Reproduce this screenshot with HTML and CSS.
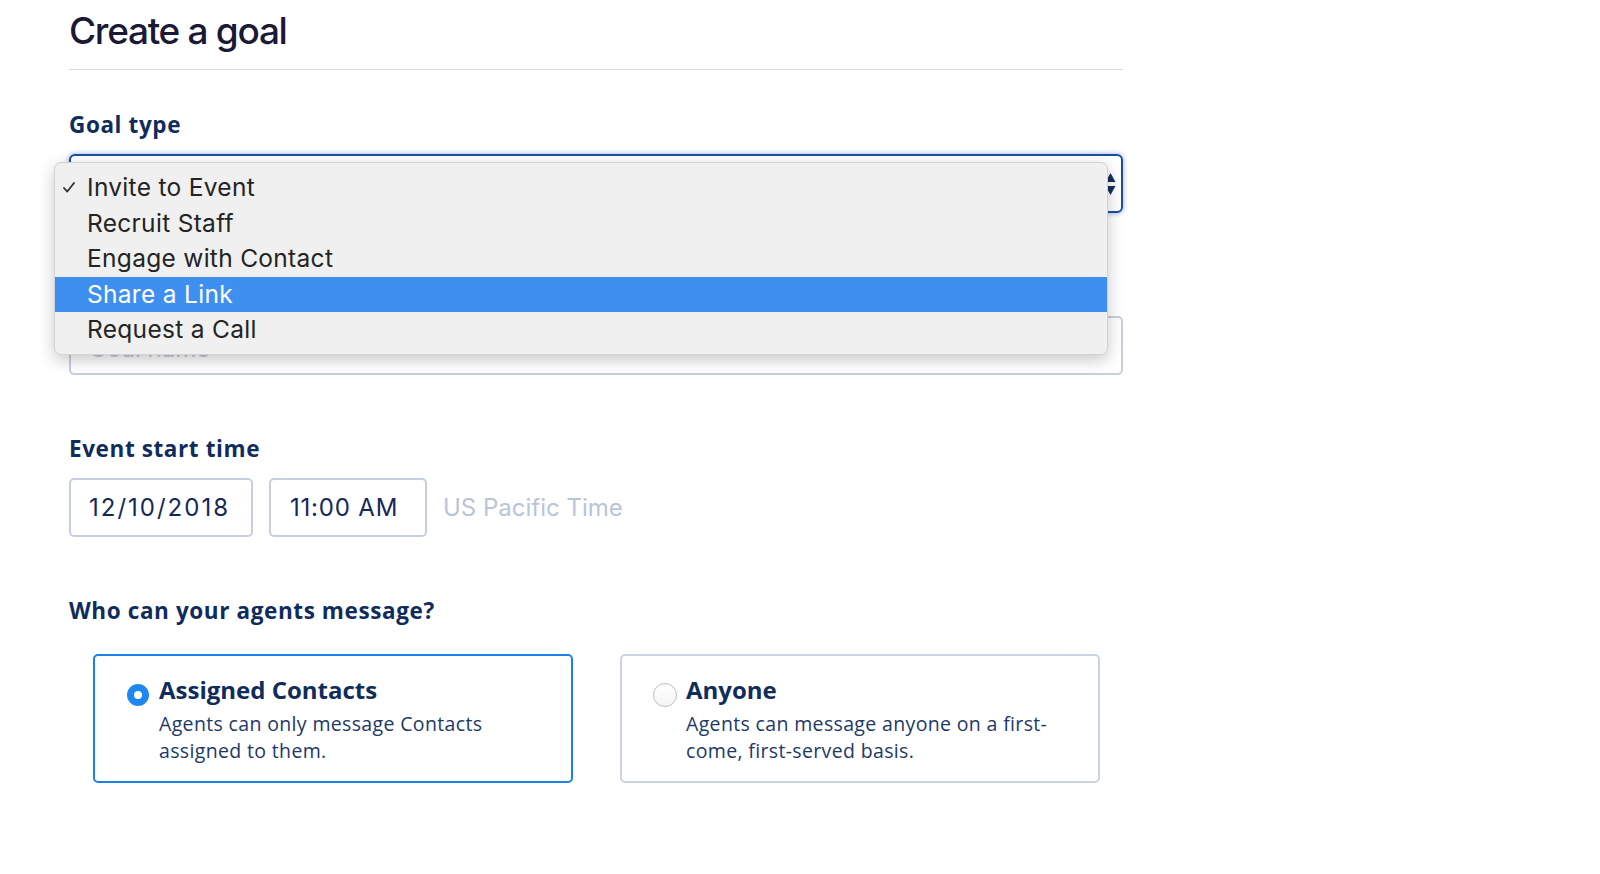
FILE: index.html
```html
<!DOCTYPE html>
<html lang="en">
<head>
<meta charset="utf-8">
<title>Create a goal</title>
<link rel="stylesheet" href="styles.css">
</head>
<body>
<div class="page">
  <h1 class="title">Create a goal</h1>

  <div class="field field-first">
    <label class="label">Goal type</label>
    <div class="select-wrap">
      <div class="select">
        <span class="select-value">Invite to Event</span>
        <svg class="select-arrows" width="11" height="24" viewBox="0 0 11 24"><path d="M5.5 1 L10.5 10 L0.5 10 Z" fill="#14305f"/><path d="M5.5 23 L10.5 14 L0.5 14 Z" fill="#14305f"/></svg>
      </div>
      <ul class="menu">
        <li class="menu-item"><svg class="check" width="12" height="11" viewBox="0 0 12 11"><path d="M1 6 L4.3 9.6 L11 1" fill="none" stroke="#2a2a2a" stroke-width="1.7" stroke-linecap="round" stroke-linejoin="round"/></svg>Invite to Event</li>
        <li class="menu-item">Recruit Staff</li>
        <li class="menu-item">Engage with Contact</li>
        <li class="menu-item active">Share a Link</li>
        <li class="menu-item">Request a Call</li>
      </ul>
    </div>
  </div>

  <div class="field">
    <label class="label">Goal name</label>
    <div class="input placeholder">Goal name</div>
  </div>

  <div class="field">
    <label class="label">Event start time</label>
    <div class="time-row">
      <div class="input input-date">12/10/2018</div>
      <div class="input input-time">11:00 AM</div>
      <span class="tz">US Pacific Time</span>
    </div>
  </div>

  <div class="field">
    <label class="label label-wide">Who can your agents message?</label>
    <div class="cards">
      <div class="card selected">
        <span class="radio checked"></span>
        <div class="card-body">
          <div class="card-title">Assigned Contacts</div>
          <div class="card-desc">Agents can only message Contacts assigned to them.</div>
        </div>
      </div>
      <div class="card">
        <span class="radio"></span>
        <div class="card-body">
          <div class="card-title">Anyone</div>
          <div class="card-desc">Agents can message anyone on a first-come, first-served basis.</div>
        </div>
      </div>
    </div>
  </div>
</div>
</body>
</html>
```

FILE: styles.css
```css
html, body {
  margin: 0;
  padding: 0;
  background: #ffffff;
}

body {
  font-family: "Open Sans", "Noto Sans", sans-serif;
  color: #13295a;
}

.page {
  width: 1054px;
  margin-left: 69px;
}

.title {
  margin: 0;
  padding: 9px 0 16px;
  font-family: Inter, "Liberation Sans", sans-serif;
  font-weight: 500;
  font-size: 37px;
  line-height: 44px;
  letter-spacing: -1.3px;
  color: #1a1936;
  border-bottom: 1px solid #d6dce7;
}

.field {
  margin-top: 59px;
}

.field-first {
  margin-top: 40px;
}

.label {
  display: block;
  font-family: "Open Sans", sans-serif;
  font-weight: 700;
  font-size: 22.5px;
  line-height: 30px;
  color: #0f2c5c;
  margin-bottom: 14px;
  letter-spacing: 0.6px;
}

.label-wide {
  margin-bottom: 28px;
}

.select-wrap {
  position: relative;
}

.select {
  box-sizing: border-box;
  height: 59px;
  border: 2px solid #1f4f9c;
  border-radius: 6px;
  box-shadow: 0 0 4px 1px rgba(70, 120, 200, 0.45);
  background: #fff;
  display: flex;
  align-items: center;
  justify-content: space-between;
  padding: 0 5px 0 18px;
  font-family: Inter, sans-serif;
  font-size: 24px;
  color: #13295a;
}

.select-arrows {
  display: block;
}

.menu {
  position: absolute;
  left: -15px;
  top: 8px;
  width: 1054px;
  box-sizing: border-box;
  margin: 0;
  padding: 7px 0 6px;
  list-style: none;
  background: #f0f0f0;
  border: 1px solid #d2d2d2;
  border-radius: 7px;
  box-shadow: 0 5px 16px rgba(0, 0, 0, 0.22);
}

.menu-item {
  position: relative;
  height: 35.5px;
  line-height: 35.5px;
  padding-left: 32px;
  font-family: Inter, "Liberation Sans", sans-serif;
  font-size: 24.5px;
  color: #242424;
  letter-spacing: 0.3px;
}

.menu-item.active {
  background: #3e8ff0;
  color: #ffffff;
}

.check {
  position: absolute;
  left: 8px;
  top: 12px;
}

.input {
  box-sizing: border-box;
  height: 59px;
  border: 2px solid #c7cfdf;
  border-radius: 5px;
  background: #fff;
  display: flex;
  align-items: center;
  padding: 0 18px;
  font-family: Inter, sans-serif;
  font-size: 24px;
  color: #13295a;
}

.placeholder {
  color: #c3cad9;
  padding-top: 6px;
}

.time-row {
  display: flex;
  align-items: center;
  gap: 16px;
}

.input-date {
  width: 184px;
  letter-spacing: 2px;
}

.input-time {
  width: 158px;
  padding: 0 19px;
  letter-spacing: 0.8px;
}

.tz {
  font-family: Inter, sans-serif;
  font-size: 24px;
  color: #bac4d8;
}

.cards {
  display: flex;
  gap: 47px;
  padding-left: 24px;
}

.card {
  box-sizing: border-box;
  width: 480px;
  height: 129px;
  border: 2px solid #ccd3e2;
  border-radius: 5px;
  display: flex;
  padding: 18px 38px 0 31px;
}

.card.selected {
  border-color: #1d80e6;
}

.radio {
  flex: none;
  box-sizing: border-box;
  width: 24px;
  height: 24px;
  margin-top: 9px;
  margin-right: 9px;
  border-radius: 50%;
  border: 1px solid #bdbdbd;
  background: linear-gradient(#ffffff, #f5f5f5);
}

.radio.checked {
  width: 22px;
  height: 22px;
  margin: 10px 10px 0 1px;
  border: 7px solid #1f87f2;
  background: #ffffff;
}

.card-title {
  font-family: "Open Sans", sans-serif;
  font-weight: 700;
  font-size: 24px;
  line-height: 32px;
  color: #0f2c5c;
}

.card-desc {
  margin-top: 4px;
  font-family: "Open Sans", sans-serif;
  font-size: 19.5px;
  line-height: 27px;
  letter-spacing: 0.35px;
  color: #1e3868;
}
```
